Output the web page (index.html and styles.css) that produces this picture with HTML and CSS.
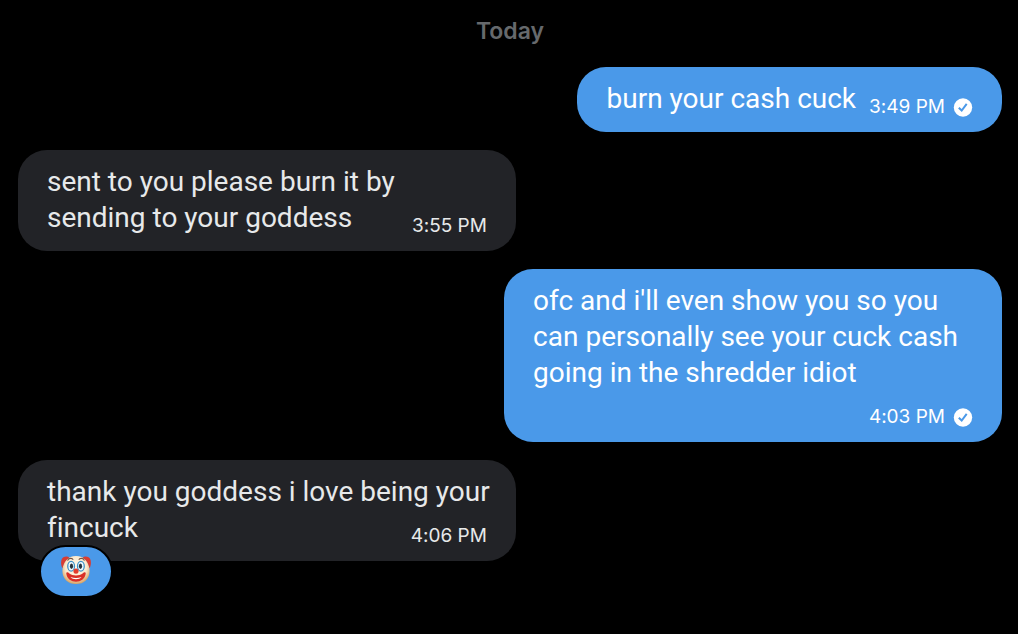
FILE: index.html
```html
<!DOCTYPE html>
<html lang="en">
<head>
<meta charset="utf-8">
<meta name="viewport" content="width=device-width, initial-scale=1">
<title>Messages</title>
<link rel="stylesheet" href="styles.css">
</head>
<body>
<main class="chat">
  <h1 class="day">Today</h1>
  <div class="bubble sent short">burn your cash cuck<span class="meta"><time>3:49 PM</time><svg class="check" viewBox="0 0 20 20" role="img" aria-label="Seen"><circle cx="10" cy="10.5" r="9.2"/><path d="M5.8 10.7l2.900 2.800 5-6.600"/></svg></span></div>
  <div class="bubble received">sent to you please burn it by<br>sending to your goddess<span class="meta"><time>3:55 PM</time></span></div>
  <div class="bubble sent">ofc and i'll even show you so you<br>can personally see your cuck cash<br>going in the shredder idiot<span class="meta own-line"><time>4:03 PM</time><svg class="check" viewBox="0 0 20 20" role="img" aria-label="Seen"><circle cx="10" cy="10.5" r="9.2"/><path d="M5.8 10.7l2.900 2.800 5-6.600"/></svg></span></div>
  <div class="bubble received">thank you goddess i love being your<br>fincuck<span class="meta"><time>4:06 PM</time></span>
    <button class="reaction" type="button" aria-label="Clown face reaction">
      <svg class="clown" viewBox="0 0 32 32" aria-hidden="true">
        <defs><radialGradient id="skin" cx="50%" cy="40%" r="60%"><stop offset="0" stop-color="#fffdf2"/><stop offset=".65" stop-color="#fbe9cd"/><stop offset="1" stop-color="#d9a262"/></radialGradient></defs>
        <path d="M16 1C25 1 30.500 7 30.500 17c0 8-6 14-14.500 14S1.500 25 1.500 17C1.500 7 7 1 16 1z" fill="url(#skin)"/>
        <path d="M1.500 14C0 11-.5 7 1 4c2-3 6-3 8-1-4 2-6 6-7.500 11zM30.500 14c1.500-3 2-7 .5-10-2-3-6-3-8-1 4 2 6 6 7.500 11z" fill="#d83c32"/>
        <path d="M7 6c1-3 5-3 6-1M19 5c1-2 5-2 6 1" fill="none" stroke="#765443" stroke-width="1.2"/>
        <g fill="#eefaff" stroke="#3e91c7" stroke-width="1.4"><ellipse cx="10.800" cy="12" rx="3.600" ry="5.200"/><ellipse cx="21.200" cy="12" rx="3.600" ry="5.200"/></g>
        <g fill="#27333b"><ellipse cx="11.200" cy="12" rx="1.700" ry="3"/><ellipse cx="20.800" cy="12" rx="1.700" ry="3"/></g>
        <circle cx="16" cy="17.200" r="2.700" fill="#e33c2d"/>
        <path d="M5.600 20c0-2 2-1.800 3-.5 4 3.200 10.800 3.200 14.800 0 1-1.300 3-1.500 3 .5C25.500 25.500 21 28.500 16 28.500S6.500 25.500 5.600 20z" fill="#d92f27"/>
        <path d="M10 23.500c4 1.300 8 1.300 12 0-1.500 1.800-3.500 2.300-6 2.300s-4.500-.5-6-2.300z" fill="#fff"/>
      </svg>
    </button>
  </div>
</main>
</body>
</html>
```
FILE: styles.css
```css
* {
  box-sizing: border-box;
}

body {
  margin: 0;
  min-height: 100vh;
  background: #000;
  font-family: Roboto, sans-serif;
}

.chat {
  display: flex;
  flex-direction: column;
  gap: 18px;
  padding: 13px 16px 38px 18px;
}

.day {
  margin: 0;
  color: #66696c;
  font-family: Inter, sans-serif;
  font-size: 23px;
  font-weight: 600;
  line-height: 36px;
  text-align: center;
}

.bubble {
  position: relative;
  display: flow-root;
  width: 50.6%;
  padding: 14px 29px 15px;
  border-radius: 29px;
  font-size: 28px;
  font-variant-ligatures: none;
  line-height: 36px;
  white-space: nowrap;
}

.sent {
  align-self: flex-end;
  background: #4a99e9;
  color: #fff;
}

.received {
  align-self: flex-start;
  background: #222327;
  color: #e7e9ea;
}

.short {
  width: auto;
}

.meta {
  display: flex;
  float: right;
  align-items: center;
  gap: 8px;
  margin: 16px 0 0 13px;
  font-family: Inter, sans-serif;
  font-size: 19px;
  line-height: 20px;
}

.own-line {
  float: none;
  justify-content: flex-end;
}

.check {
  width: 20px;
  height: 20px;
  fill: #fff;
}

.check path {
  fill: none;
  stroke: #4a99e9;
  stroke-width: 2;
}

.reaction {
  position: absolute;
  bottom: -37px;
  left: 21px;
  display: flex;
  align-items: center;
  justify-content: center;
  width: 74px;
  height: 53px;
  padding: 0 0 4px;
  border: 2px solid #000;
  border-radius: 27px;
  background: #4a99e9;
}

.clown {
  width: 30px;
  height: 30px;
}
```
